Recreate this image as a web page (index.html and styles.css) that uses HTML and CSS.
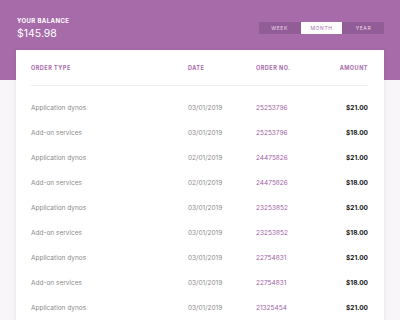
FILE: index.html
```html
<!DOCTYPE html>
<html>
<head>
    <meta charset="UTF-8">
    <title>Orders</title>
    <link rel="stylesheet" href="styles.css">
</head>
<body>
    <div class="top">
        <div class="balance">
            <div class="balance-label">Your balance</div>
            <div class="balance-value">$145.98</div>
        </div>
        <div class="tabs">
            <button class="tab">Week</button>
            <button class="tab active">Month</button>
            <button class="tab">Year</button>
        </div>
    </div>
    <div class="card">
        <div class="row head">
            <div>Order type</div>
            <div>Date</div>
            <div>Order no.</div>
            <div class="amount">Amount</div>
        </div>
        <div class="rows">
            <div class="row"><div>Application dynos</div><div class="date">03/01/2019</div><div class="num">25253796</div><div class="amount">$21.00</div></div>
            <div class="row"><div>Add-on services</div><div class="date">03/01/2019</div><div class="num">25253796</div><div class="amount">$18.00</div></div>
            <div class="row"><div>Application dynos</div><div class="date">02/01/2019</div><div class="num">24475826</div><div class="amount">$21.00</div></div>
            <div class="row"><div>Add-on services</div><div class="date">02/01/2019</div><div class="num">24475826</div><div class="amount">$18.00</div></div>
            <div class="row"><div>Application dynos</div><div class="date">03/01/2019</div><div class="num">23253852</div><div class="amount">$21.00</div></div>
            <div class="row"><div>Add-on services</div><div class="date">03/01/2019</div><div class="num">23253852</div><div class="amount">$18.00</div></div>
            <div class="row"><div>Application dynos</div><div class="date">03/01/2019</div><div class="num">22754831</div><div class="amount">$21.00</div></div>
            <div class="row"><div>Add-on services</div><div class="date">03/01/2019</div><div class="num">22754831</div><div class="amount">$18.00</div></div>
            <div class="row"><div>Application dynos</div><div class="date">03/01/2019</div><div class="num">21325454</div><div class="amount">$21.00</div></div>
        </div>
    </div>
</body>
</html>
```

FILE: styles.css
```css
body {
    margin: 0;
    height: 320px;
    overflow: hidden;
    font-family: "Inter", "Liberation Sans", sans-serif;
    background: linear-gradient(#a76baa 0, #a76baa 80px, #f8f6f9 80px);
}

.top {
    display: flex;
    justify-content: space-between;
    align-items: flex-start;
    height: 50px;
    padding: 0 17px;
    box-sizing: border-box;
}

.balance {
    padding-top: 17px;
    color: #fff;
}

.balance-label {
    font-size: 6px;
    font-weight: 700;
    letter-spacing: 0.4px;
    text-transform: uppercase;
}

.balance-value {
    margin-top: 3px;
    font-size: 10.5px;
}

.tabs {
    display: flex;
    gap: 1px;
    margin-top: 22px;
    margin-right: -1px;
    background-color: #915b95;
}

.tab {
    width: 41px;
    height: 12px;
    padding: 0;
    border: none;
    background-color: #925c96;
    color: #ead9eb;
    font-family: inherit;
    font-size: 5px;
    letter-spacing: 0.6px;
    text-transform: uppercase;
}

.tab.active {
    background-color: #fff;
    color: #a76baa;
}

.card {
    margin: 0 16px;
    padding: 0 16px 0 15px;
    height: 280px;
    background-color: #fff;
    box-shadow: 0 0 4px rgba(80, 40, 80, 0.12);
}

.row {
    display: grid;
    grid-template-columns: 157px 68px 1fr 60px;
    align-items: center;
    height: 25px;
    font-size: 6.5px;
    color: #8a8a8a;
}

.row.head {
    height: 35px;
    border-bottom: 1px solid #ececec;
    font-size: 5.5px;
    font-weight: 700;
    letter-spacing: 0.5px;
    text-transform: uppercase;
    color: #a76baa;
}

.rows {
    padding-top: 9px;
}

.num {
    color: #a15fa5;
}

.amount {
    text-align: right;
    font-weight: 700;
    color: #111;
}

.row.head .amount {
    color: #a76baa;
}
```
